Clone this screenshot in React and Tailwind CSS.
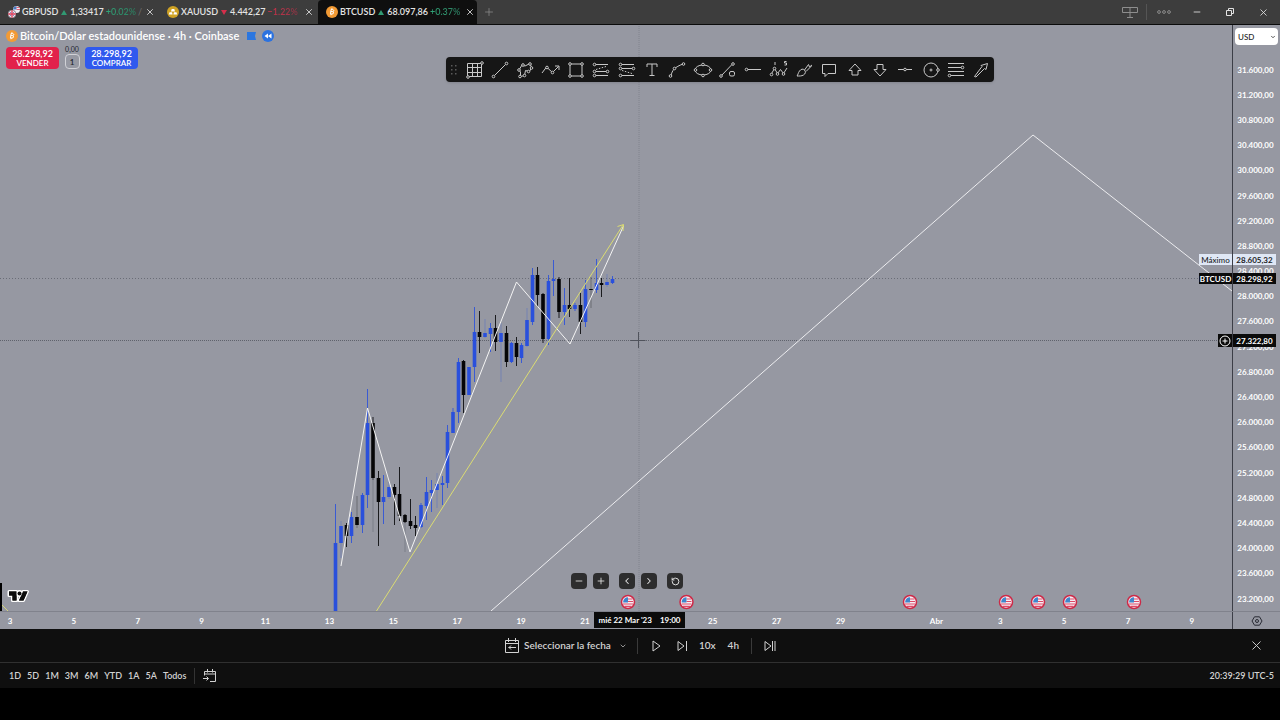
import { Minus, Plus, ChevronLeft, ChevronRight, ChevronDown, RotateCcw, X } from "lucide-react"

const candles = [
  // x, top, bottom, high, low, up
  [335.5, 543, 611, 504, 611, 1],
  [341, 526, 543, 521, 558, 1],
  [346.5, 525, 536, 523, 547, 0],
  [351.5, 517, 536, 512, 543, 1],
  [357, 517, 525, 496, 528, 0],
  [362.5, 495, 525, 493, 533, 1],
  [367.5, 423, 495, 389, 508, 1],
  [373, 423, 478, 417, 480, 0],
  [378.5, 478, 502, 471, 546, 0],
  [383.5, 497, 502, 475, 524, 1],
  [389, 487, 497, 482, 499, 1],
  [394.5, 487, 495, 484, 525, 0],
  [399.5, 494, 516, 467, 521, 0],
  [405, 515, 522, 514, 523, 0],
  [410.5, 521, 526, 499, 529, 0],
  [415.5, 525, 528, 516, 536, 0],
  [421, 505, 527, 503, 528, 1],
  [426.5, 492, 506, 477, 520, 1],
  [431.5, 490, 493, 480, 512, 1],
  [437, 484, 490, 473, 508, 1],
  [442.5, 483, 485, 476, 505, 1],
  [447.5, 432, 483, 425, 488, 1],
  [453, 412, 433, 408, 433, 1],
  [458.5, 362, 412, 358, 423, 1],
  [463.5, 361, 395, 360, 413, 0],
  [469, 367, 395, 367, 395, 1],
  [474.5, 332, 367, 307, 382, 1],
  [479.5, 332, 337, 311, 353, 0],
  [485, 333, 337, 319, 338, 1],
  [490.5, 328, 334, 323, 352, 1],
  [495.5, 328, 342, 315, 351, 0],
  [501, 333, 342, 323, 382, 1],
  [506.5, 333, 362, 326, 367, 0],
  [511.5, 343, 362, 342, 363, 1],
  [516.5, 343, 357, 337, 366, 0],
  [521.5, 345, 358, 343, 363, 1],
  [527, 320, 346, 308, 347, 1],
  [532.5, 275, 322, 268, 325, 1],
  [537.5, 275, 295, 267, 307, 0],
  [543, 294, 339, 293, 343, 0],
  [548.5, 281, 339, 275, 345, 1],
  [553.5, 279, 281, 260, 296, 1],
  [559, 279, 312, 277, 318, 0],
  [564.5, 305, 312, 288, 325, 1],
  [569.5, 305, 309, 278, 317, 0],
  [575, 305, 309, 303, 311, 1],
  [580.5, 305, 322, 293, 334, 0],
  [585.5, 289, 322, 280, 327, 1],
  [591, 289, 290, 277, 308, 0],
  [596.5, 283, 290, 259, 293, 1],
  [601.5, 283, 285, 278, 297, 0],
  [607, 282, 285, 274, 287, 1],
  [612.5, 279, 283, 276, 284, 1],
]

// candles whose wick is barely visible
const faint = [341, 357, 389, 437, 485, 501, 527, 591, 607]

const prices = [
  "31.600,00", "31.200,00", "30.800,00", "30.400,00", "30.000,00", "29.600,00", "29.200,00", "28.800,00",
  "28.400,00", "28.000,00", "27.600,00", "27.200,00", "26.800,00", "26.400,00", "26.000,00", "25.600,00",
  "25.200,00", "24.800,00", "24.400,00", "24.000,00", "23.600,00", "23.200,00",
]

const datesMarch = ["3", "5", "7", "9", "11", "13", "15", "17", "19", "21", "", "25", "27", "29"]
const datesApril = ["Abr", "3", "5", "7", "9"]

const events = [628, 686.5, 910, 1006, 1038, 1070, 1134]

// hollow handle at the end of a tool's stroke
const Dot = ({ x, y, r = 1.3 }) => <circle cx={x} cy={y} r={r} fill="#0f0f0f" />

const tools = [
  ["Cuadrícula", <><path d="M1.500 2.500h14v13h-14zM6.500 2.500v13M11.500 2.500v13M1.500 6.500h14M1.500 11.500h14" /><Dot x={16} y={2} /><Dot x={2} y={16} /></>],
  ["Línea de tendencia", <><path d="M3.5 14.5l11-11" /><Dot x={2.5} y={15.5} /><Dot x={15.5} y={2.5} /></>],
  ["Trazado", <><path d="M3 9l3-5 3 1 5-2.500 1.500 4-2 4-4-1-1 5-4 1V11z" /><Dot x={3} y={9} /><Dot x={7} y={4} /><Dot x={14} y={3} /><Dot x={15.500} y={7} /><Dot x={12.500} y={10.500} /><Dot x={8.500} y={14.500} /><Dot x={4} y={15.500} /></>],
  ["Polilínea", <><path d="M0 12l4.500-6 6 5.500 6-6M13 5h4v4" /><Dot x={5} y={6.500} /><Dot x={10.500} y={11.500} /></>],
  ["Rectángulo", <><path d="M3 3h12v12H3z" /><Dot x={3} y={3} /><Dot x={15} y={3} /><Dot x={3} y={15} /><Dot x={15} y={15} /></>],
  ["Posición larga", <><path d="M3 3.500h13M3 10.500h13M3 14.500h13" /><path d="M4 8.500L14 5.500" strokeDasharray="1.500 1.500" /><Dot x={2.500} y={3.500} /><Dot x={2.500} y={10.500} /><Dot x={15.500} y={10.500} /><Dot x={2.500} y={14.500} /></>],
  ["Posición corta", <><path d="M3 3.500h13M3 7.500h13M3 14.500h13" /><path d="M4 9.500l10 3" strokeDasharray="1.500 1.500" /><Dot x={2.500} y={3.500} /><Dot x={2.500} y={7.500} /><Dot x={15.500} y={7.500} /><Dot x={2.500} y={14.500} /></>],
  ["Texto", <path d="M4 6V3h10v3M9 3v12M6.500 14.500h5" />],
  ["Curva", <><path d="M3 15C4 9 7 6 15 3" /><Dot x={2.500} y={15} /><Dot x={6.500} y={7.500} /><Dot x={15.500} y={3} /></>],
  ["Elipse", <><ellipse cx="9" cy="9" rx="8" ry="5" /><Dot x={9} y={3.500} /><Dot x={9} y={14.500} /><Dot x={1.500} y={9} /><Dot x={16.500} y={9} /></>],
  ["Línea con ángulo", <><path d="M2.500 14.500L13 3.500" /><Dot x={2} y={15} /><Dot x={14} y={3} /><rect x="10.500" y="10.500" width="5" height="4.500" rx="1.500" /></>],
  ["Rayo horizontal", <><path d="M3 8.500h14" /><Dot x={2.500} y={8.500} /></>],
  ["Ondas de Elliott", <><path d="M1 13.500L4.500 7.500l3 5 3-4 3 4L17 7M5 1V4M16.500 .500h-2v1.500h2v2h-2" /><Dot x={1.500} y={13.500} /><Dot x={4.500} y={7.500} /><Dot x={7.500} y={13} /><Dot x={13.500} y={13} /></>],
  ["Pincel", <path d="M2 15c1-1 1-3 2.500-5C6 8 8 7.500 9.500 9c1.500 1.500 1 4-1 5-2 1.200-4 1-6.500 1zM9.500 9l4-5.500L14.500 6 17 4M11 10.500L16.500 5" />],
  ["Llamada", <path d="M2.500 3.500h13v9H8l-3 3V12.500H2.500z" />],
  ["Flecha arriba", <path d="M9 3l6 6.500h-3V14H6V9.500H3z" />],
  ["Flecha abajo", <path d="M9 15l6-6.500h-3V3.500H6v5H3z" />],
  ["Línea horizontal", <><path d="M2 8.500h14" /><Dot x={9} y={8.500} /></>],
  ["Círculo", <><circle cx="9" cy="9" r="7" /><Dot x={9} y={9} r={1} /><Dot x={16} y={9} /></>],
  ["Fibonacci", <><path d="M1 2.500h16M1 6.500h14M1 10.500h16M3 14.500h14" /><Dot x={15.500} y={6.500} /><Dot x={2.500} y={14.500} /></>],
  ["Flecha", <path d="M2.500 15.500L10 5.500 9 4.500l6.500-2-1.500 6-1.500-1L4 16z" />],
]

function BitcoinIcon() {
  return (
    <svg viewBox="0 0 12 12" className="size-3 shrink-0">
      <circle cx="6" cy="6" r="6" fill="#f29a34" />
      <path d="M5 3.300l1.800.3c1.600.4 1.300 2.100-.3 2 1.700.4 1.400 2.500-.5 2.400L4 7.800M5.200 3.400L4.400 7.900M4.900 5.500l1.700.2M6 2.300l-.2 1M5.200 8l-.2 1.200" fill="none" stroke="#fff" strokeWidth="1" />
    </svg>
  )
}

function PoundIcon() {
  return (
    <svg viewBox="0 0 12 12" className="size-3 shrink-0">
      <circle cx="8.500" cy="3.500" r="3.500" fill="#f0eef4" />
      <path d="M5.200 2.500A3.500 3.500 0 018.500 0v3.500H5z" fill="#4a78bf" />
      <path d="M8.500 1.500h2.800M8.500 3.500H12" stroke="#d8405c" strokeWidth=".8" />
      <circle cx="4" cy="8" r="4" fill="#f3e4ea" stroke="#3d3d3d" strokeWidth=".4" />
      <path d="M4 4.200v7.600M.2 8h7.600" stroke="#d8405c" strokeWidth="1.300" />
      <path d="M1.500 5.500l1.400 1.400M6.500 5.500L5.100 6.900M1.500 10.500l1.400-1.400M6.500 10.500L5.100 9.100" stroke="#5a6fae" strokeWidth=".8" />
    </svg>
  )
}

function GoldIcon() {
  return (
    <svg viewBox="0 0 12 12" className="size-3 shrink-0">
      <circle cx="6" cy="6" r="6" fill="#cfa224" />
      <path d="M4.700 3h2.600l.7 2.500H4zM2.500 6.200H5L5.600 8.500H1.800zM7 6.200h2.500l.7 2.300H6.400z" fill="#fff" />
    </svg>
  )
}

function Tab({ icon, name, up, price, change, extra, active }) {
  return (
    <div className={`flex w-[159px] items-center pl-2 pr-px ${active ? "rounded-t-sm bg-[#0f0f0f]" : ""}`}>
      <a href="#" className="flex flex-1 items-center gap-[2px] whitespace-nowrap">
        {icon}
        <span className="font-semibold">{name}</span>
        <svg viewBox="0 0 6 5" className="mx-px h-[5px] w-[6px] shrink-0">
          {up ? <path d="M3 0l3 5H0z" fill="#319a73" /> : <path d="M3 5l3-5H0z" fill="#d52f4b" />}
        </svg>
        <span className="font-semibold">{price}</span>
        <span className={`bg-linear-to-r bg-clip-text font-semibold text-transparent ${up ? "from-[#2fa577] to-[#2c7b5f]" : "from-[#d52f4b] to-[#8c3444]"}`}>{change}</span>
        <span className="text-[#707070]">{extra}</span>
      </a>
      <button aria-label={`Cerrar ${name}`} className="flex size-4 shrink-0 items-center justify-center">
        <X size={10} strokeWidth={2} />
      </button>
    </div>
  )
}

function Header() {
  return (
    <header className="flex h-[25px] shrink-0 items-stretch border-b border-[#0b0b0b] bg-[#3d3d3d] text-[9px] text-[#e4e4e4]">
      <Tab icon={<PoundIcon />} name="GBPUSD" up price="1,33417" change="+0.02%" extra="/" />
      <Tab icon={<GoldIcon />} name="XAUUSD" price="4.442,27" change="−1.22%" />
      <Tab icon={<BitcoinIcon />} name="BTCUSD" up price="68.097,86" change="+0.37%" active />
      <button aria-label="Nueva pestaña" className="flex w-6 items-center justify-center text-[#8c8c8c]">
        <Plus size={12} strokeWidth={1.5} />
      </button>
      <div className="ml-auto flex items-center">
        <button aria-label="Diseño" className="flex w-8 justify-center text-[#8e8e8e]">
          <svg viewBox="0 0 16 11" className="h-[11px] w-4" fill="none" stroke="currentColor">
            <path d="M.5.500h15v5H.500zM8 .500v10M5 10.500h6" />
          </svg>
        </button>
        <span className="h-4 w-px bg-[#555]" />
        <button aria-label="Más" className="flex w-[34px] justify-center text-[#a0a0a0]">
          <svg viewBox="0 0 14 4" className="h-1 w-[14px]" fill="none" stroke="currentColor" strokeWidth=".8">
            <circle cx="2" cy="2" r="1.400" /><circle cx="7" cy="2" r="1.400" /><circle cx="12" cy="2" r="1.400" />
          </svg>
        </button>
        <button aria-label="Minimizar" className="flex w-8 justify-center"><Minus size={10} /></button>
        <button aria-label="Restaurar" className="flex w-[34px] justify-center">
          <svg viewBox="0 0 8 8" className="size-2" fill="none" stroke="currentColor">
            <path d="M.5 2.500h5v5h-5zM2.500 2V.500h5v5H6" />
          </svg>
        </button>
        <button aria-label="Cerrar" className="flex w-[33px] justify-center"><X size={11} strokeWidth={1.800} /></button>
      </div>
    </header>
  )
}

function Flag({ x }) {
  return (
    <g transform={`translate(${x} 602)`}>
      <circle r="6.500" fill="#f6eef4" stroke="#cc2947" strokeWidth="1.500" />
      <path d="M0-3h4.500M0-.500h5M-5 2H5M-3.500 4.300h7" stroke="#dd4a67" strokeWidth="1.200" />
      <path d="M-4.800-.500A5 5 0 010-4.800V.500h-4.800z" fill="#3f86cc" />
    </g>
  )
}

function Chart() {
  return (
    <svg viewBox="0 25 1232 586" preserveAspectRatio="none" className="absolute inset-0 size-full" fill="none">
      <path d="M639 26V611" stroke="#777a83" strokeDasharray="1 1" strokeWidth="1" opacity=".6" />
      <path d="M0 278.500H1232" stroke="#6a6d77" strokeDasharray="1 2" />
      <path d="M0 340.500H1232" stroke="#5f626c" strokeDasharray="1 1" />
      {candles.map(([x, top, bottom, high, low, up]) => (
        <g key={x} fill={up ? "#2a50dc" : "#050507"}>
          <rect x={x - 0.5} y={high} width="1" height={low - high} opacity={faint.includes(x) ? 0.3 : 0.85} />
          <rect x={x - 1.8} y={top} width="3.6" height={bottom - top} />
        </g>
      ))}
      <path d="M373 478V532M405 523V552" stroke="#7b7e88" />
      <path d="M0 583h2v28H0z" fill="#000" />
      <path d="M2 605l6 6" stroke="#d5d67c" />
      <path d="M341 566L367.500 408 410 552 516.500 282 570 344 623.500 226" stroke="#f4f4f4" />
      <path d="M376.500 611L623 225M617.500 226.500L623.500 224.500 623 231" stroke="#dbdc72" />
      <path d="M491 611L1033 135 1232 291" stroke="#ececef" />
      <path d="M638.500 332v16M630.500 340.500h15" stroke="#50535c" />
      {events.map((x) => <Flag key={x} x={x} />)}
    </svg>
  )
}

function Legend() {
  return (
    <div className="absolute left-1.5 top-[5px] text-white">
      <div className="flex h-3 items-center gap-[2px] text-[11px] font-semibold whitespace-nowrap">
        <BitcoinIcon />
        <h1>Bitcoin/Dólar estadounidense · 4h · Coinbase</h1>
        <svg viewBox="0 0 9 8" className="ml-1.5 h-2 w-[9px]"><path d="M0 0h9L8 4l1 4H0z" fill="#2b76e0" /></svg>
        <svg viewBox="0 0 12 12" className="ml-1 size-3">
          <circle cx="6" cy="6" r="6" fill="#2b72e0" />
          <path d="M6 3.500v5L2.500 6zM9.500 3.500v5L6 6z" fill="#fff" />
        </svg>
      </div>
      <div className="mt-[5px] flex items-start gap-[5px] text-center font-semibold">
        <button className="h-[22px] w-[53px] rounded bg-[#e2214b]">
          <span className="block text-[9px] leading-[10px]">28.298,92</span>
          <span className="block text-[8px] leading-[8px]">VENDER</span>
        </button>
        <div className="-mt-[3px] flex w-4 flex-col items-center text-[#24262c]">
          <span className="text-[7px] leading-[10px] font-normal">0,00</span>
          <button aria-label="Cantidad" className="size-[15px] rounded border border-[#d0d1d6] text-[8px] leading-[12px]">1</button>
        </div>
        <button className="h-[22px] w-[53px] rounded bg-[#3059ee]">
          <span className="block text-[9px] leading-[10px]">28.298,92</span>
          <span className="block text-[8px] leading-[8px]">COMPRAR</span>
        </button>
      </div>
    </div>
  )
}

function DrawingToolbar() {
  return (
    <div className="absolute left-[446px] top-8 flex h-[25px] w-[548px] items-center rounded bg-[#161616] text-[#c8c8c8] shadow">
      <svg viewBox="0 0 6 10" className="mx-[5px] h-[10px] w-1.5" fill="#5a5a5a">
        <path d="M0 0h1.500v1.500H0zM4 0h1.500v1.500H4zM0 4h1.500v1.500H0zM4 4h1.500v1.500H4zM0 8h1.500v1.500H0zM4 8h1.500v1.500H4z" />
      </svg>
      {tools.map(([name, drawing]) => (
        <button key={name} aria-label={name} className="flex h-full flex-1 items-center justify-center">
          <svg viewBox="0 0 18 18" className="size-[18px] overflow-visible" fill="none" stroke="currentColor" strokeWidth="1">
            {drawing}
          </svg>
        </button>
      ))}
    </div>
  )
}

function ChartControls() {
  const btn = "flex size-4 items-center justify-center rounded-sm bg-[#2d2d2e]"
  return (
    <div className="absolute bottom-[22px] left-[571px] flex text-[#e8e8e8]">
      <button aria-label="Alejar" className={btn}><Minus size={10} /></button>
      <button aria-label="Acercar" className={`ml-1.5 ${btn}`}><Plus size={10} /></button>
      <button aria-label="Izquierda" className={`ml-2.5 ${btn}`}><ChevronLeft size={10} strokeWidth={2.5} /></button>
      <button aria-label="Derecha" className={`ml-1.5 ${btn}`}><ChevronRight size={10} strokeWidth={2.5} /></button>
      <button aria-label="Restablecer" className={`ml-2.5 ${btn}`}><RotateCcw size={9} strokeWidth={2.5} /></button>
    </div>
  )
}

function PriceAxis() {
  return (
    <aside className="flex w-12 shrink-0 flex-col border-l border-[#3c3e47] text-[8px] font-bold text-white">
      <div className="h-8 shrink-0 px-[2px] pt-[3px]">
        <div className="relative">
          <select aria-label="Moneda" className="h-[17px] w-full appearance-none rounded-sm bg-white pl-[3px] text-[8px] font-medium text-[#222]">
            <option>USD</option>
          </select>
          <ChevronDown size={6} strokeWidth={3} className="pointer-events-none absolute right-[2px] top-1.5 text-[#222]" />
        </div>
      </div>
      <div className="flex flex-1 flex-col pr-[2px]">
        {prices.map((p) => (
          <span key={p} className="flex flex-1 items-center justify-center leading-none">{p}</span>
        ))}
      </div>
    </aside>
  )
}

function PriceTags() {
  return (
    <div className="text-[8px] font-bold text-white">
      <div className="absolute right-1 top-[229px] flex h-[11px] items-center gap-px leading-none text-[#1c1e26]">
        <span className="flex h-full w-[33px] items-center justify-center bg-[#dfe7f5] font-medium">Máximo</span>
        <span className="flex h-full w-[43px] items-center justify-center bg-[#dfe7f5]">28.605,32</span>
      </div>
      <div className="absolute right-1 top-[248px] flex h-[11px] items-center gap-px leading-none">
        <span className="flex h-full w-[33px] items-center justify-center bg-[#0b0b0b]">BTCUSD</span>
        <span className="flex h-full w-[43px] items-center justify-center bg-[#0b0b0b]">28.298,92</span>
      </div>
      <div className="absolute right-1 top-[309px] flex h-[13px] items-center gap-px leading-none">
        <button aria-label="Añadir alerta" className="flex h-full w-[14px] items-center justify-center bg-[#0b0b0b]">
          <svg viewBox="0 0 12 12" className="size-3" fill="none" stroke="#fff">
            <circle cx="6" cy="6" r="5" /><path d="M6 3.500v5M3.500 6h5" />
          </svg>
        </button>
        <span className="flex h-full w-[43px] items-center justify-center bg-[#0b0b0b]">27.322,80</span>
      </div>
    </div>
  )
}

function TimeAxis() {
  return (
    <div className="flex h-[18px] shrink-0 border-t border-[#80828c] text-[8px] font-bold text-white">
      <div className="relative min-w-0 flex-1 overflow-hidden">
        <div className="-ml-[22px] mr-2 flex h-full items-center">
          {datesMarch.map((d, i) => <span key={i} className="flex-[2_1_0%] text-center">{d}</span>)}
          <span className="flex-[1_1_0%]" />
          {datesApril.map((d) => <span key={d} className="flex-[2_1_0%] text-center">{d}</span>)}
        </div>
        <div className="absolute left-[594px] top-0 flex h-4 w-[91px] items-center justify-center gap-2 bg-[#0b0b0b] whitespace-nowrap">
          <span>mié 22 Mar '23</span>
          <span>19:00</span>
        </div>
      </div>
      <button aria-label="Ajustes" className="flex w-12 items-center justify-center border-l border-[#3c3e47] text-[#2a2c35]">
        <svg viewBox="0 0 12 10" className="h-[10px] w-3" fill="none" stroke="currentColor">
          <path d="M3.500.800h5L11 5 8.500 9.200h-5L1 5z" /><circle cx="6" cy="5" r="1.500" />
        </svg>
      </button>
    </div>
  )
}

function ReplayBar() {
  return (
    <div className="flex h-[34px] shrink-0 items-center border-b border-[#303030] bg-[#0f0f0f] px-4 text-[10px] font-semibold text-[#d2d2d2]">
      <div className="flex-1" />
      <div className="flex items-center">
        <button className="flex items-center gap-1 whitespace-nowrap">
          <svg viewBox="0 0 16 15" className="h-[15px] w-4" fill="none" stroke="currentColor">
            <path d="M1.500 2.500h13v12h-13zM1.500 5.500h13M4.500 0v4M11.500 0v4M12 9.500H4.500M7 7.500l-2 2 2 2" />
          </svg>
          <span>Seleccionar la fecha</span>
          <ChevronDown size={8} className="ml-1" />
        </button>
        <span className="ml-2.5 h-4 w-px bg-[#3a3a3a]" />
        <button aria-label="Reproducir" className="ml-3.5">
          <svg viewBox="0 0 9 12" className="h-3 w-[9px]" fill="none" stroke="currentColor"><path d="M1 1v10l7-5z" /></svg>
        </button>
        <button aria-label="Avanzar" className="ml-4">
          <svg viewBox="0 0 10 12" className="h-3 w-[10px]" fill="none" stroke="currentColor"><path d="M1 1.500v9L7 6zM9.500 1v10" /></svg>
        </button>
        <button className="ml-3">10x</button>
        <button className="ml-3">4h</button>
        <span className="ml-3 h-4 w-px bg-[#3a3a3a]" />
        <button aria-label="Ir al tiempo real" className="ml-3">
          <svg viewBox="0 0 12 12" className="h-3 w-3" fill="none" stroke="currentColor"><path d="M1 1.500v9L7 6zM8.500 1v10M11 1v10" /></svg>
        </button>
      </div>
      <div className="flex flex-1 justify-end">
        <button aria-label="Cerrar repetición"><X size={15} strokeWidth={1.500} /></button>
      </div>
    </div>
  )
}

function RangeBar() {
  return (
    <footer className="flex h-[25px] shrink-0 items-center bg-[#0f0f0f] px-1.5 pl-[9px] text-[9px] font-semibold text-[#d2d2d2]">
      <div className="flex gap-1.5">
        {["1D", "5D", "1M", "3M", "6M", "YTD", "1A", "5A", "Todos"].map((r) => <button key={r}>{r}</button>)}
      </div>
      <span className="ml-2 h-4 w-px bg-[#333]" />
      <button aria-label="Ir a" className="ml-2">
        <svg viewBox="0 0 14 14" className="size-[14px]" fill="none" stroke="currentColor">
          <path d="M1.500 6.500V2.500h11v10H7M1.500 5h11M4.500 0v3.500M9.500 0v3.500M0 9.500h5M3.500 7.500l2 2-2 2" />
        </svg>
      </button>
      <span className="ml-auto">20:39:29 UTC-5</span>
    </footer>
  )
}

function App() {
  return (
    <div className="flex h-screen flex-col overflow-hidden bg-black pb-8 font-['Lato','Open_Sans',sans-serif]">
      <Header />
      <main className="relative flex min-h-0 flex-1 flex-col bg-[#9698a2]">
        <div className="flex min-h-0 flex-1">
          <section className="relative min-w-0 flex-1 overflow-hidden">
            <Chart />
            <Legend />
            <DrawingToolbar />
            <ChartControls />
            <svg viewBox="0 0 22 14" className="absolute bottom-2 left-[7px] h-[14px] w-[22px]">
              <g fill="#0b0b0b" stroke="#fff" strokeWidth="3" strokeLinejoin="round" paintOrder="stroke">
                <path d="M2 2.500h7.500v9H5.500V6.500H2zM16 2.500h4.500l-4 9h-4.500z" />
                <circle cx="12.500" cy="4.500" r="2" />
              </g>
              <path d="M2 2.500h7.500v9H5.500V6.500H2zM16 2.500h4.500l-4 9h-4.500z" fill="#0b0b0b" />
            </svg>
          </section>
          <PriceAxis />
        </div>
        <TimeAxis />
        <PriceTags />
      </main>
      <ReplayBar />
      <RangeBar />
    </div>
  )
}

export default App
